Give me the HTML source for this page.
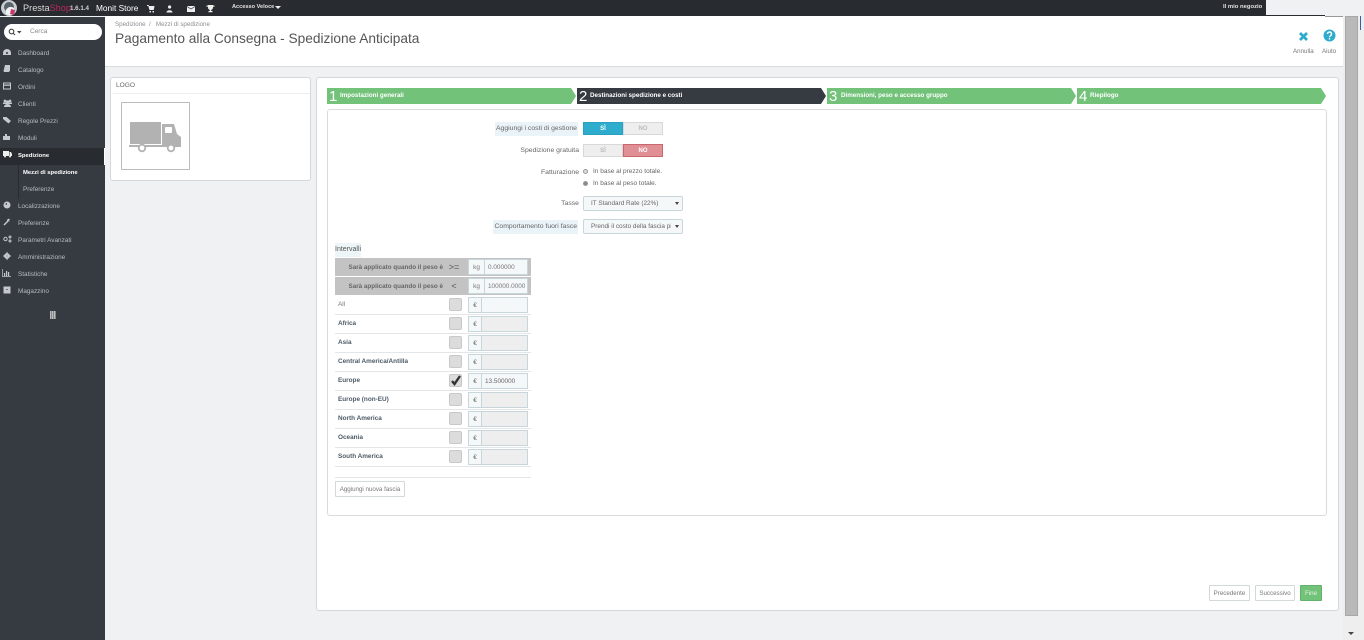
<!DOCTYPE html>
<html lang="it">
<head>
<meta charset="utf-8">
<title>Pagamento alla Consegna</title>
<style>
html,body{margin:0;padding:0;width:1364px;height:640px;overflow:hidden;background:#eff1f2;font-family:"Liberation Sans",sans-serif;color:#555}
*{box-sizing:border-box}
.a{position:absolute;white-space:nowrap}
#top{left:0;top:0;width:1266px;height:16px;background:#282b30}
#side{left:0;top:17px;width:105px;height:623px;background:#363a41}
#hd{left:105px;top:16px;width:1238px;height:51px;background:#fff;border-bottom:1px solid #d9dbdd}
.m{position:absolute;left:18px;font-size:6.4px;color:#b8bcc2;white-space:nowrap;line-height:10px}
.ic{position:absolute;left:3px}
.panel{background:#fff;border:1px solid #d3d8db;border-radius:3px;position:absolute}
.step{position:absolute;top:88px;height:16px;background:#72c279;color:#fff;white-space:nowrap;clip-path:polygon(0 0,calc(100% - 5px) 0,100% 50%,calc(100% - 5px) 100%,0 100%)}
.step b{position:absolute;left:2px;top:0;font-weight:400;font-size:15px;line-height:17px}
.step span{position:absolute;top:0;font-weight:700;font-size:6.25px;line-height:15px}
.lab{position:absolute;font-size:6.85px;color:#666;text-align:right;white-space:nowrap;line-height:14px}
.tg{position:absolute;width:40px;height:13px;font-size:6px;font-weight:700;text-align:center;line-height:12px;border:1px solid #d8d8d8;background:#eee;color:#bbb}
.sel{position:absolute;left:583px;width:100px;height:15px;background:#f5f8f9;border:1px solid #c7d6db;border-radius:2px;font-size:6.4px;line-height:14px;color:#666;padding-left:7px;white-space:nowrap;overflow:hidden}
.sel:after{content:"";position:absolute;right:3px;top:5px;border-left:2.5px solid transparent;border-right:2.5px solid transparent;border-top:3.5px solid #444}
.rad{position:absolute;left:583px;width:5px;height:5px;border-radius:50%;border:1px solid #999;background:#ddd}
.row{position:absolute;left:335px;width:196px;height:19px;border-bottom:1px solid #e3e6e8}
.row .n{position:absolute;left:3px;top:4px;font-size:6.4px;font-weight:700;color:#4c5a66;line-height:9px;white-space:nowrap}
.row .c{position:absolute;left:114px;top:2px;width:13px;height:13px;background:#dcdcdc;border:1px solid #c8c8c8;border-radius:2px}
.row .u{position:absolute;left:133px;top:1px;width:60px;height:16px;border:1px solid #c7d6db;background:#eee;font-size:6.4px;color:#666;line-height:15px}
.row .u i{position:absolute;left:0;top:0;bottom:0;width:13px;background:#f5f8f9;border-right:1px solid #c7d6db;font-style:normal;text-align:center}
.row .u em{position:absolute;left:16px;font-style:normal}
.gray{position:absolute;left:335px;width:196px;height:18px;background:#c3c3c3}
.gray .t{position:absolute;right:88px;top:5px;font-size:6.3px;font-weight:700;color:#666;white-space:nowrap;line-height:9px}
.gray .o{position:absolute;left:109px;width:20px;text-align:center;top:3px;font-size:9px;color:#555;line-height:12px}
.gray .u{position:absolute;left:133px;top:1px;width:60px;height:16px;border:1px solid #c7d6db;background:#f5f8f9;font-size:6.4px;color:#777;line-height:15px;overflow:hidden;white-space:nowrap}
.gray .u i{position:absolute;left:0;top:0;bottom:0;width:16px;border-right:1px solid #c7d6db;font-style:normal;text-align:center}
.gray .u em{position:absolute;left:19px;font-style:normal}
.btn{position:absolute;top:585px;height:16px;background:#fff;border:1px solid #d3d8db;border-radius:1px;font-size:6.2px;color:#777;text-align:center;line-height:15px}
</style>
</head>
<body>
<div class="a" id="top"></div>
<svg class="a" style="left:1px;top:0" width="17" height="17" viewBox="0 0 17 17"><circle cx="8" cy="8" r="8" fill="#c9ced2"/><circle cx="8" cy="7" r="5" fill="#59636b"/><path d="M5 10 Q8 5 13 8 L13 14 Q8 16 5 14Z" fill="#f2f2f2"/><path d="M10 9 L14 10 L13 15 L9 14Z" fill="#c43c6b"/></svg>
<div class="a" style="left:23px;top:1px;font:400 9.2px/14px 'Liberation Sans',sans-serif;color:#d8d8d8">Presta<span style="color:#b5295f">Shop</span></div>
<div class="a" style="left:70px;top:3px;font:700 6.2px/11px 'Liberation Sans',sans-serif;color:#d5d5d5">1.6.1.4</div>
<div class="a" style="left:96px;top:1px;font:400 8.3px/14px 'Liberation Sans',sans-serif;color:#fff">Monit Store</div>
<svg class="a" style="left:146px;top:4px" width="70" height="10" viewBox="0 0 70 10" fill="#eee"><path d="M1 1h1.500l.5 1h5.500l-.8 4H3.500L2.300 2H1zM3.500 7h1.500v1.500H3.500zM6.500 7h1.500v1.500H6.500z"/><path d="M22 3a1.600 1.600 0 1 1 3.200 0a1.600 1.600 0 1 1-3.200 0zM20.500 8.500c0-3 6-3 6 0z"/><rect x="41" y="2" width="8" height="6"/><path d="M41 2.500l4 2.500 4-2.500" stroke="#282b30" stroke-width=".7" fill="none"/><path d="M62 1h5v2.500c0 1.500-1 2.200-1.800 2.400V7h1.300v1.200h-4V7h1.300V5.900C62.900 5.700 62 5 62 3.500z"/><rect x="60.500" y="1.500" width="8" height="1.200"/></svg>
<div class="a" style="left:232px;top:2px;font:700 5.6px/11px 'Liberation Sans',sans-serif;color:#e2e2e2">Accesso Veloce</div>
<div class="a" style="left:275px;top:6px;border-left:3px solid transparent;border-right:3px solid transparent;border-top:3.500px solid #eee"></div>
<div class="a" style="left:1223px;top:2px;font:700 5.9px/11px 'Liberation Sans',sans-serif;color:#e2e2e2">Il mio negozio</div>

<div class="a" id="side">
  <div style="position:absolute;left:4px;top:7px;width:98px;height:16px;background:#fff;border-radius:8px"></div>
  <svg style="position:absolute;left:8px;top:11px" width="14" height="8" viewBox="0 0 14 8"><circle cx="3.500" cy="3.500" r="2.300" fill="none" stroke="#444" stroke-width="1.100"/><path d="M5 5l2 2" stroke="#444" stroke-width="1.100"/><path d="M9 3h4.500l-2.200 2.500z" fill="#444"/></svg>
  <div class="a" style="left:30px;top:10px;font-size:6.500px;line-height:10px;color:#888">Cerca</div>

  <div style="position:absolute;left:0;top:131px;width:105px;height:17px;background:#282b30"></div>
  <div style="position:absolute;left:104px;top:131px;width:1px;height:17px;background:#fff"></div>
  <div style="position:absolute;left:18px;top:148px;width:1px;height:34px;background:#282b30"></div>

  <svg class="ic" style="top:31px" width="8" height="8" viewBox="0 0 8 8" fill="#c5c8cc"><path d="M0 5a4 4 0 0 1 8 0v2H0z"/><circle cx="4" cy="5" r="1" fill="#363a41"/></svg><div class="m" style="top:32px">Dashboard</div>
  <svg class="ic" style="top:48px" width="8" height="8" viewBox="0 0 8 8" fill="#c5c8cc"><path d="M2 0h5v5.500L6 7H1l-.5-1z"/></svg><div class="m" style="top:49px">Catalogo</div>
  <svg class="ic" style="top:65px" width="8" height="8" viewBox="0 0 8 8"><rect x=".5" y="1" width="7" height="6" fill="none" stroke="#c5c8cc"/><rect x="0" y="2.500" width="8" height="1.300" fill="#c5c8cc"/></svg><div class="m" style="top:66px">Ordini</div>
  <svg class="ic" style="top:82px" width="9" height="8" viewBox="0 0 9 8" fill="#c5c8cc"><circle cx="2" cy="2" r="1.400"/><circle cx="7" cy="2" r="1.400"/><circle cx="4.500" cy="3" r="1.600"/><path d="M1 8c0-4 7-4 7 0z"/><rect x="0" y="3.500" width="9" height="1.500"/></svg><div class="m" style="top:83px">Clienti</div>
  <svg class="ic" style="top:99px" width="9" height="8" viewBox="0 0 9 8" fill="#c5c8cc"><path d="M0 1h3.500L8 5 5.500 7.500 0 3z"/></svg><div class="m" style="top:100px">Regole Prezzi</div>
  <svg class="ic" style="top:116px" width="8" height="8" viewBox="0 0 8 8" fill="#c5c8cc"><path d="M0 3h2V1h2v2h3v4H0z"/></svg><div class="m" style="top:117px">Moduli</div>
  <svg class="ic" style="top:133px" width="9" height="8" viewBox="0 0 9 8" fill="#eee"><path d="M0 1h6v5H0zM6.500 2H8l1 2v2H6.500z"/><circle cx="2" cy="6.500" r="1"/><circle cx="7" cy="6.500" r="1"/></svg><div class="m" style="top:134px;color:#fff;font-weight:700;font-size:5.9px">Spedizione</div>
  <div class="m" style="top:151px;left:23px;color:#fff;font-weight:700;font-size:5.9px">Mezzi di spedizione</div>
  <div class="m" style="top:168px;left:23px">Preferenze</div>
  <svg class="ic" style="top:184px" width="8" height="8" viewBox="0 0 8 8" fill="#c5c8cc"><circle cx="4" cy="4" r="3.500"/><path d="M2 3l2-1v2z" fill="#363a41"/></svg><div class="m" style="top:185px">Localizzazione</div>
  <svg class="ic" style="top:201px" width="8" height="8" viewBox="0 0 8 8"><path d="M1 7l4-4" stroke="#c5c8cc" stroke-width="1.400"/><path d="M4 3a2 2 0 0 1 3-2L6 2.500 7 3.500z" fill="#c5c8cc"/></svg><div class="m" style="top:202px">Preferenze</div>
  <svg class="ic" style="top:218px" width="9" height="8" viewBox="0 0 9 8" fill="none" stroke="#c5c8cc"><circle cx="2.500" cy="4" r="1.700"/><circle cx="7" cy="2" r="1"/><circle cx="7" cy="6" r="1"/></svg><div class="m" style="top:219px">Parametri Avanzati</div>
  <svg class="ic" style="top:235px" width="8" height="8" viewBox="0 0 8 8"><circle cx="4" cy="4" r="2" fill="none" stroke="#c5c8cc" stroke-width="1.800"/><path d="M4 0v8M0 4h8" stroke="#c5c8cc"/></svg><div class="m" style="top:236px">Amministrazione</div>
  <svg class="ic" style="top:252px;left:2px" width="9" height="8" viewBox="0 0 9 8" fill="#c5c8cc"><path d="M0 0h.7v7H9v.8H0z"/><path d="M2 4h1.200v3H2zM4 2h1.200v5H4zM6 3h1.200v4H6z"/></svg><div class="m" style="top:253px">Statistiche</div>
  <svg class="ic" style="top:269px" width="8" height="8" viewBox="0 0 8 8" fill="#c5c8cc"><rect x=".5" y=".5" width="7" height="7"/><rect x="3" y="3" width="2" height="1" fill="#777"/></svg><div class="m" style="top:270px">Magazzino</div>
  <div style="position:absolute;left:50px;top:294px;width:6px;height:8px;background:repeating-linear-gradient(90deg,#bbb 0 1px,#888 1px 2px)"></div>
</div>

<div class="a" id="hd">
  <div class="a" style="left:10px;top:4px;font-size:6.200px;line-height:9px;color:#8a8f94">Spedizione &nbsp;/ &nbsp; Mezzi di spedizione</div>
  <div class="a" style="left:10px;top:13px;font-size:13.700px;line-height:20px;color:#555">Pagamento alla Consegna - Spedizione Anticipata</div>
  <svg class="a" style="left:1193px;top:15px" width="11" height="11" viewBox="0 0 11 11"><path d="M2 2l7 7M9 2l-7 7" stroke="#2eacce" stroke-width="2.800"/></svg>
  <div class="a" style="left:1188px;top:31px;font-size:6.200px;line-height:9px;color:#777">Annulla</div>
  <svg class="a" style="left:1218px;top:13px" width="13" height="13" viewBox="0 0 13 13"><circle cx="6.500" cy="6.500" r="6" fill="#2eacce"/><path d="M4.500 5a2 2 0 1 1 3 1.700c-.7.400-1 .8-1 1.500" fill="none" stroke="#fff" stroke-width="1.400"/><rect x="5.800" y="9" width="1.400" height="1.500" fill="#fff"/></svg>
  <div class="a" style="left:1217px;top:31px;font-size:6.200px;line-height:9px;color:#777">Aiuto</div>
</div>
<div class="a" style="left:1266px;top:15px;width:59px;height:1px;background:#282b30"></div>
<div class="a" style="left:1325px;top:16px;width:18px;height:1px;background:#999"></div>

<!-- scrollbars -->
<div class="a" style="left:1343px;top:16px;width:21px;height:624px;background:#eee"></div>
<div class="a" style="left:1345px;top:16px;width:13px;height:600px;background:#b9b9b9;border:1px solid #a8a8a8"></div>
<div class="a" style="left:1360px;top:16px;width:1px;height:14px;background:#3b5ba5"></div>
<div class="a" style="left:1348px;top:632px;border-left:3.500px solid transparent;border-right:3.500px solid transparent;border-top:3.500px solid #444"></div>

<!-- logo panel -->
<div class="panel" style="left:110px;top:77px;width:201px;height:104px">
  <div class="a" style="left:5px;top:3px;font:400 6.600px/10px 'Liberation Sans',sans-serif;color:#666">LOGO</div>
  <div class="a" style="left:2px;top:15px;width:197px;height:1px;background:#eee"></div>
  <div class="a" style="left:10px;top:24px;width:69px;height:68px;background:#fff;border:1px solid #bbb;border-radius:1px"></div>
  <svg class="a" style="left:18px;top:42px" width="55" height="33" viewBox="0 0 55 33"><rect x="1" y="2" width="31" height="22" fill="#b2b2b2"/><rect x="0" y="25" width="33" height="2" fill="#b2b2b2"/><path d="M33 4h12l3 10 4 3v10H33z" fill="#b2b2b2"/><rect x="36" y="7" width="7" height="6" rx="1" fill="#fff"/><circle cx="13" cy="28" r="3.300" fill="#fff" stroke="#b2b2b2" stroke-width="1.800"/><circle cx="42" cy="28" r="3.300" fill="#fff" stroke="#b2b2b2" stroke-width="1.800"/></svg>
</div>

<!-- main panel -->
<div class="panel" style="left:316px;top:77px;width:1023px;height:534px"></div>
<div class="step" style="left:327px;width:249px"><b>1</b><span style="left:13px">Impostazioni generali</span></div>
<div class="step" style="left:577px;width:249px;background:#363a41"><b>2</b><span style="left:13px">Destinazioni spedizione e costi</span></div>
<div class="step" style="left:827px;width:249px"><b>3</b><span style="left:14px">Dimensioni, peso e accesso gruppo</span></div>
<div class="step" style="left:1077px;width:249px"><b>4</b><span style="left:13px">Riepilogo</span></div>
<div class="panel" style="left:327px;top:109px;width:1000px;height:407px;border-color:#d8dcde"></div>

<div class="lab" style="right:786px;top:122px;background:#eaf3f8;padding:0 1px">Aggiungi i costi di gestione</div>
<div class="tg" style="left:583px;top:122px;background:#2eacce;border-color:#2aa0bf;color:#fff">SÌ</div>
<div class="tg" style="left:623px;top:122px">NO</div>
<div class="lab" style="right:785px;top:144px">Spedizione gratuita</div>
<div class="tg" style="left:583px;top:144px">SÌ</div>
<div class="tg" style="left:623px;top:144px;background:#e08f95;border-color:#c9666e;color:#fff">NO</div>
<div class="lab" style="right:785px;top:166px">Fatturazione</div>
<i class="rad" style="top:169px"></i><div class="lab" style="left:593px;top:165px;font-size:6.500px">In base al prezzo totale.</div>
<i class="rad" style="top:181px;background:#888"></i><div class="lab" style="left:593px;top:177px;font-size:6.500px">In base al peso totale.</div>
<div class="lab" style="right:785px;top:197px">Tasse</div>
<div class="sel" style="top:196px">IT Standard Rate (22%)</div>
<div class="lab" style="right:786px;top:220px;background:#eaf3f8;padding:0 1px">Comportamento fuori fasce</div>
<div class="sel" style="top:219px"><span style="display:block;width:80px;overflow:hidden">Prendi il costo della fascia più grande</span></div>

<div class="lab" style="left:335px;top:243px;font-size:7px;background:#eef5f8;color:#555">Intervalli</div>

<div class="gray" style="top:258px"><div class="t">Sarà applicato quando il peso è</div><div class="o">&gt;=</div><div class="u"><i>kg</i><em>0.000000</em></div></div>
<div class="gray" style="top:277px"><div class="t">Sarà applicato quando il peso è</div><div class="o">&lt;</div><div class="u"><i>kg</i><em>100000.0000</em></div></div>

<div class="row" style="top:296px"><div class="n" style="font-weight:400;color:#777">All</div><div class="c"></div><div class="u" style="background:#f5f8f9"><i>€</i></div></div>
<div class="row" style="top:315px"><div class="n">Africa</div><div class="c"></div><div class="u"><i>€</i></div></div>
<div class="row" style="top:334px"><div class="n">Asia</div><div class="c"></div><div class="u"><i>€</i></div></div>
<div class="row" style="top:353px"><div class="n">Central America/Antilla</div><div class="c"></div><div class="u"><i>€</i></div></div>
<div class="row" style="top:372px"><div class="n">Europe</div><div class="c"><svg width="11" height="11" viewBox="0 0 11 11" style="position:absolute;left:0;top:0"><path d="M2 6l2.500 3L10 1" fill="none" stroke="#333" stroke-width="2.400"/></svg></div><div class="u" style="background:#f5f8f9"><i>€</i><em>13.500000</em></div></div>
<div class="row" style="top:391px"><div class="n">Europe (non-EU)</div><div class="c"></div><div class="u"><i>€</i></div></div>
<div class="row" style="top:410px"><div class="n">North America</div><div class="c"></div><div class="u"><i>€</i></div></div>
<div class="row" style="top:429px"><div class="n">Oceania</div><div class="c"></div><div class="u"><i>€</i></div></div>
<div class="row" style="top:448px"><div class="n">South America</div><div class="c"></div><div class="u"><i>€</i></div></div>

<div class="a" style="left:335px;top:477px;width:196px;height:1px;background:#e3e6e8"></div>
<div class="btn" style="left:335px;top:481px;width:70px;white-space:nowrap">Aggiungi nuova fascia</div>

<div class="btn" style="left:1209px;width:41px">Precedente</div>
<div class="btn" style="left:1255px;width:40px">Successivo</div>
<div class="btn" style="left:1300px;width:22px;background:#72c279;border-color:#62b269;color:#e8f5e9">Fine</div>
</body>
</html>
